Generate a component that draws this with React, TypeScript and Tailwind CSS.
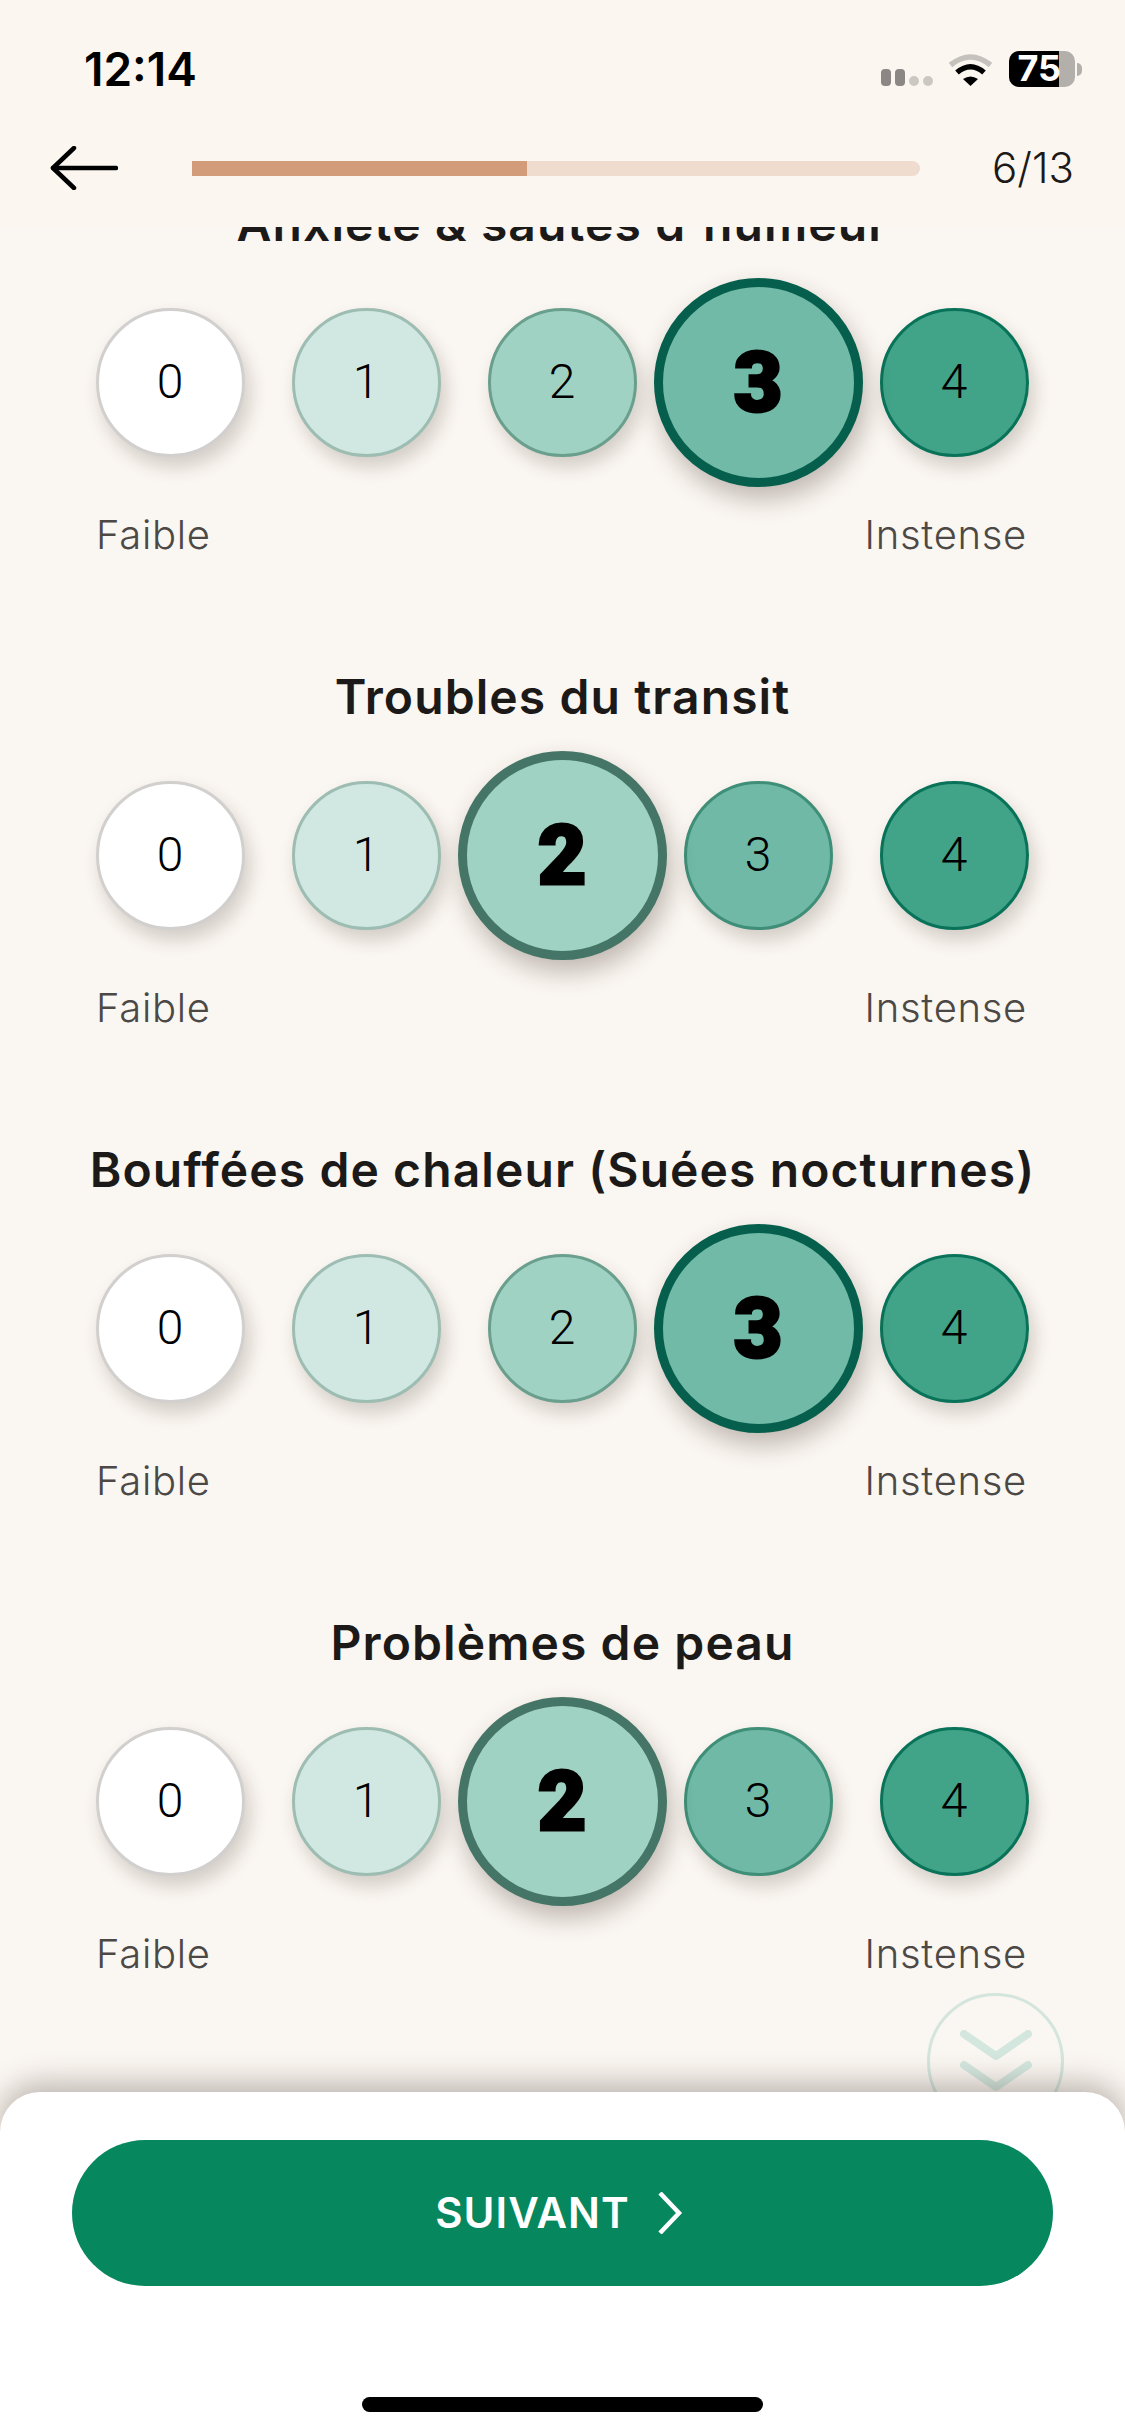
import React from 'react';

const ROWS = [
  { title: "Anxiété & sautes d'humeur", value: 3 },
  { title: 'Troubles du transit', value: 2 },
  { title: 'Bouffées de chaleur (Suées nocturnes)', value: 3 },
  { title: 'Problèmes de peau', value: 2 },
];

const SMALL = [
  'bg-white border-[#d2d0ce]',
  'bg-[#d1e8e2] border-[#9dbdb3]',
  'bg-[#a0d2c3] border-[#6a9f8e]',
  'bg-[#6fb9a6] border-[#3f8f78]',
  'bg-[#41a387] border-[#09735a]',
];

const BIG: Record<number, string> = {
  2: 'bg-[#a0d2c3] border-[#457566]',
  3: 'bg-[#70baa7] border-[#065f4c]',
};

function Dot({ n, selected }: { n: number; selected: boolean }) {
  if (selected) {
    return (
      <div
        className={`relative z-[1] w-[209px] h-[209px] shrink-0 rounded-full border-[9px] flex items-center justify-center text-black text-[84px] font-black font-['Roboto',sans-serif] [-webkit-text-stroke:3px_black] shadow-[4px_12px_24px_rgba(60,40,30,0.3)] ${BIG[n]}`}
      >
        {n}
      </div>
    );
  }
  return (
    <div
      className={`w-[149px] h-[149px] shrink-0 rounded-full border-[3px] flex items-center justify-center pb-[2px] text-black text-[48px] font-light font-['Roboto',sans-serif] shadow-[5px_10px_18px_rgba(60,40,30,0.2)] ${SMALL[n]}`}
    >
      {n}
    </div>
  );
}

function Scale({ title, value }: { title: string; value: number }) {
  return (
    <section className="h-[473px] shrink-0">
      <h2 className="h-[57px] flex items-center justify-center text-[#1c1a18] text-[48px] tracking-[1.1px] leading-none font-semibold font-['Inter',sans-serif] whitespace-nowrap">
        {title}
      </h2>
      <div className="grid grid-cols-5 w-[980px] ml-[72px] mt-[26px] h-[209px]">
        {[0, 1, 2, 3, 4].map((n) => (
          <div key={n} className="flex items-center justify-center">
            <Dot n={n} selected={n === value} />
          </div>
        ))}
      </div>
      <div className="flex justify-between pl-[96px] pr-[98px] mt-[25px] text-[#4b4845] text-[40px] tracking-[0.7px] leading-[46px] font-light font-['Inter',sans-serif]">
        <span>Faible</span>
        <span>Instense</span>
      </div>
    </section>
  );
}

function StatusIcons() {
  return (
    <div className="flex items-center">
      <div className="flex items-end gap-[4px] mr-[15px] mt-[16px]">
        <span className="w-[10px] h-[17px] rounded-[4px] bg-[#8a8784]" />
        <span className="w-[10px] h-[17px] rounded-[4px] bg-[#8a8784]" />
        <span className="w-[10px] h-[10px] rounded-full bg-[#cbc8c4]" />
        <span className="w-[10px] h-[10px] rounded-full bg-[#cbc8c4]" />
      </div>
      <svg width="45" height="34" viewBox="0 0 45 34" fill="none" className="mr-[16px]">
        <path d="M2.5 13 Q22.5 -3 42.5 13" stroke="#c5c2be" strokeWidth="5.5" />
        <path d="M9 20.5 Q22.5 9 36 20.5" stroke="#000" strokeWidth="5.5" />
        <path d="M15 27 Q22.5 22 30 27 L22.5 34 Z" fill="#000" />
      </svg>
      <div className="flex items-center">
        <div className="w-[66px] h-[36px] rounded-[10px] overflow-hidden bg-[#b3b0ac] flex">
          <div className="w-[50px] h-full bg-black" />
        </div>
        <span className="w-[5px] h-[13px] rounded-r-full bg-[#b3b0ac] ml-[2px]" />
      </div>
    </div>
  );
}

export default function App() {
  return (
    <div className="w-[1125px] h-[2436px] flex flex-col overflow-hidden bg-[#fbf6f1]">
      <header className="h-[227px] shrink-0 relative z-[2] bg-[#fcf6f1]">
        <div className="h-[138px] flex items-center justify-between pl-[84px] pr-[43px]">
          <span className="text-black text-[46px] leading-none font-semibold font-['Inter',sans-serif]">12:14</span>
          <div className="relative">
            <StatusIcons />
            <span className="absolute right-[21px] top-[-2px] text-white text-[36px] leading-[38px] font-bold font-['Inter',sans-serif]">75</span>
          </div>
        </div>
        <div className="h-[60px] flex items-center pl-[50px]">
          <svg width="68" height="44" viewBox="0 0 68 44" fill="none" stroke="#000" strokeWidth="4.5" strokeLinecap="round" strokeLinejoin="round" className="shrink-0">
            <path d="M24 2 L3 22 L24 42" />
            <path d="M3 22 H66" />
          </svg>
          <div className="ml-[74px] w-[728px] h-[15px] rounded-r-full bg-[#f0dccf] shrink-0">
            <div className="w-[335px] h-full bg-[#d29c7b]" />
          </div>
          <span className="ml-[72px] text-[#1c1a18] text-[42px] leading-none font-light font-['Inter',sans-serif]">6/13</span>
        </div>
      </header>

      <main className="relative flex-1 min-h-0 overflow-hidden bg-[#faf6f1]">
        <div className="flex flex-col -mt-[32px]">
          {ROWS.map((r) => (
            <Scale key={r.title} title={r.title} value={r.value} />
          ))}
        </div>
        {/* scroll hint, half hidden behind the bottom sheet */}
        <div className="absolute left-[927px] top-[1766px] w-[137px] h-[137px] rounded-full border-[3px] border-[#d3e5dd] flex items-center justify-center">
          <svg width="72" height="64" viewBox="0 0 72 64" fill="none" stroke="#d3e7df" strokeWidth="8" strokeLinecap="round" strokeLinejoin="round">
            <path d="M4 4 L36 26 L68 4" />
            <path d="M4 35 L36 57 L68 35" />
          </svg>
        </div>
      </main>

      <footer className="relative z-[3] h-[344px] shrink-0 bg-white rounded-t-[40px] pt-[48px] shadow-[0_-8px_30px_rgba(70,55,45,0.35)]">
        <button className="ml-[72px] w-[981px] h-[146px] pr-[7px] rounded-full bg-[#06875e] flex items-center justify-center text-white text-[42px] tracking-[1px] leading-none font-semibold font-['Inter',sans-serif]">
          SUIVANT
          <svg width="26" height="42" viewBox="0 0 26 42" fill="none" stroke="#fff" strokeWidth="4.5" className="ml-[27px]">
            <path d="M3 1 L22 21 L3 41" />
          </svg>
        </button>
        <div className="ml-[362px] mt-[111px] w-[401px] h-[15px] rounded-full bg-black" />
      </footer>
    </div>
  );
}
